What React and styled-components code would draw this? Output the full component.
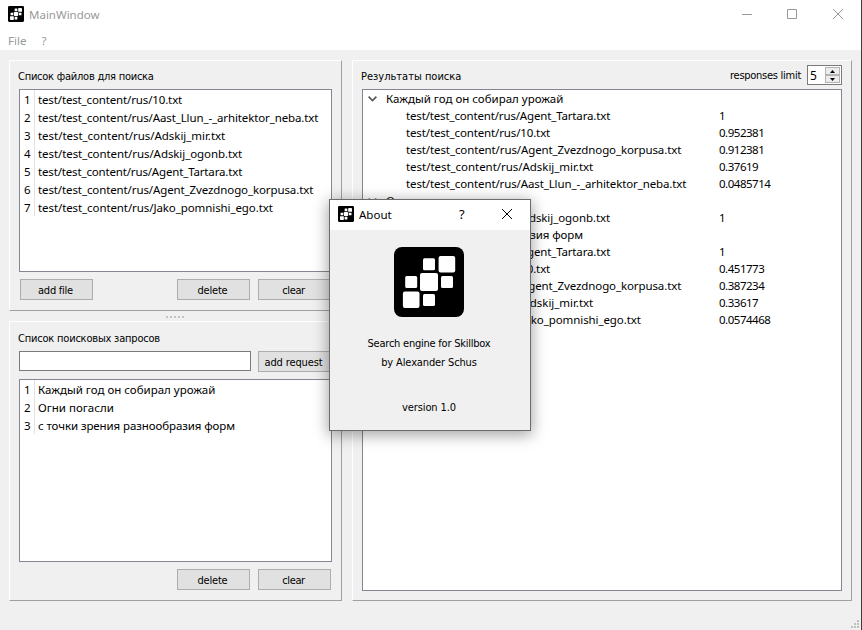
import React from "react";
import styled, { createGlobalStyle } from "styled-components";

const GlobalStyle = createGlobalStyle`
  * { box-sizing: border-box; }
  body { margin: 0; background: #f0f0f0; color: #000; overflow: hidden; }
`;

const listFont = '11.5px "Noto Sans", "Open Sans", sans-serif';
const labelFont = '11px "DejaVu Sans Condensed", "DejaVu Sans", sans-serif';

const Window = styled.div`
  position: relative;
  width: 862px;
  height: 630px;
  display: flex;
  flex-direction: column;
  background: #f0f0f0;
  border-right: 1px solid #3c3c3c;
  font: ${listFont};
`;

const Header = styled.header`
  height: 50px;
  flex: none;
  background: #fff;
  color: #999;
`;

const TitleBar = styled.div`
  height: 30px;
  display: flex;
  align-items: center;
  padding: 0 0 2px 8px;
  gap: 5px;
`;

const WindowTitle = styled.span`
  flex: 1;
  padding-top: 1px;
`;

const Controls = styled.svg`
  display: block;
  flex: none;
`;

const MenuBar = styled.nav`
  display: flex;
  gap: 15px;
  padding-left: 8px;
  line-height: 22px;
`;

const Workspace = styled.main`
  flex: 1;
  display: flex;
  gap: 10px;
  padding: 10px 9px 29px 9px;
`;

const Splitter = styled.div`
  width: 333px;
  display: flex;
  flex-direction: column;
`;

const Frame = styled.section`
  display: flex;
  flex-direction: column;
  height: ${(p) => p.$height}px;
  flex: ${(p) => (p.$grow ? 1 : "none")};
  border: 1px solid;
  border-color: #fff #a0a0a0 #a0a0a0 #fff;
  padding: ${(p) => p.$pad || "9px 9px 10px"};
`;

const Handle = styled.div`
  height: 10px;
  display: flex;
  justify-content: center;
  gap: 2px;
  padding: 5px 2px 0 0;
`;

const HandleDot = styled.i`
  width: 2px;
  height: 2px;
  background: #c4c4c4;
`;

const Label = styled.span`
  font: ${labelFont};
  line-height: ${(p) => p.$line || 14}px;
  white-space: nowrap;
  letter-spacing: ${(p) => p.$tracking || 0}px;
`;

const GroupLabel = styled(Label)`
  margin-left: -1px;
`;

const ListBox = styled.div`
  flex: 1;
  min-height: 0;
  background: #fff;
  border: 1px solid #828790;
  margin-top: ${(p) => p.$top || 0}px;
`;

const ListRow = styled.div`
  height: 18px;
  display: flex;
  line-height: 20px;
`;

const RowNumber = styled.span`
  width: 15px;
  padding-left: 4px;
  border-right: 1px solid #e2e2e2;
`;

const ItemText = styled.span`
  padding-left: ${(p) => p.$indent || 0}px;
  white-space: nowrap;
  letter-spacing: ${(p) => p.$tracking || 0}px;
`;

const ButtonRow = styled.div`
  display: flex;
  gap: 8px;
  padding: 0 1px;
  margin-top: 7px;
  justify-content: flex-end;
`;

const Button = styled.button`
  width: 73px;
  height: 21px;
  flex: none;
  padding: 1px 2px 0 0;
  background: #e1e1e1;
  border: 1px solid #adadad;
  color: #000;
  text-align: center;
  font: ${labelFont};
  letter-spacing: ${(p) => p.$tracking || -0.2}px;
  margin-right: ${(p) => (p.$pushRight ? "auto" : 0)};
`;

const RequestRow = styled.div`
  display: flex;
  gap: 7px;
  margin-top: 5px;
`;

const RequestInput = styled.input`
  width: 232px;
  height: 20px;
  background: #fff;
  border: 1px solid #7a7a7a;
  outline: none;
`;

const ResultsHeader = styled.div`
  display: flex;
  height: 20px;
  align-items: flex-start;
  justify-content: space-between;
`;

const LimitGroup = styled.div`
  display: flex;
  gap: 6px;
`;

const SpinBox = styled.div`
  width: 35px;
  height: 20px;
  display: flex;
  justify-content: space-between;
  background: #fff;
  border: 1px solid #7a7a7a;
  padding-left: 2px;
  font: 12px/20px "Noto Sans", sans-serif;
`;

const SpinButtons = styled.div`
  width: 16px;
  display: grid;
  grid-template-rows: 8px 8px;
  padding: 1px 1px 1px 0;
`;

const SpinButton = styled.div`
  display: grid;
  place-items: center;
  background: #ececec;
  border: 1px solid #b4b4b4;
`;

const TreeRow = styled.div`
  height: 17px;
  display: flex;
  line-height: 17px;
  align-items: center;
`;

const TreeName = styled.div`
  width: 356px;
  display: flex;
  align-items: center;
  padding-left: ${(p) => (p.$child ? 43 : 5)}px;
  gap: 9px;
`;

const Grip = styled.svg`
  position: absolute;
  right: 2px;
  bottom: 2px;
`;

const Dialog = styled.div`
  position: absolute;
  left: 329px;
  top: 199px;
  width: 202px;
  height: 232px;
  border: 1px solid #6b6b6b;
  background: #f0f0f0;
  box-shadow: 0 3px 14px 1px rgba(0, 0, 0, 0.36);
`;

const DialogTitle = styled.div`
  height: 30px;
  display: flex;
  align-items: center;
  gap: 5px;
  padding: 0 0 2px 8px;
  background: #fff;
`;

const DialogName = styled.span`
  flex: 1;
  padding-top: 1px;
`;

const HelpMark = styled.span`
  font-size: 13px;
  width: 37px;
`;

const DialogBody = styled.div`
  display: flex;
  flex-direction: column;
  align-items: center;
  padding: 17px 2px 0 0;
`;

const Spacer = styled.div`
  height: ${(p) => p.$size}px;
`;

function Logo({ size }) {
  return (
    <svg width={size} height={size} viewBox="0 0 70 70">
      <rect width="70" height="70" rx={size < 20 ? 5 : 8} fill="#000" />
      <g fill="#fff">
        <rect x="29" y="11.2" width="12" height="12" rx="1.5" />
        <rect x="44.6" y="9" width="16.6" height="16.6" rx="2" />
        <rect x="11.2" y="29" width="12" height="12" rx="1.5" />
        <rect x="26" y="26" width="18" height="18" rx="2" />
        <rect x="47" y="29" width="12" height="12" rx="1.5" />
        <rect x="8.9" y="44.4" width="16.6" height="16.6" rx="2" />
        <rect x="29" y="47" width="12" height="12" rx="1.5" />
      </g>
    </svg>
  );
}

const dir = "test/test_content/rus/";

const files = [
  ["10.txt", -0.14],
  ["Aast_Llun_-_arhitektor_neba.txt", -0.12],
  ["Adskij_mir.txt", -0.04],
  ["Adskij_ogonb.txt", -0.08],
  ["Agent_Tartara.txt", -0.16],
  ["Agent_Zvezdnogo_korpusa.txt", -0.11],
  ["Jako_pomnishi_ego.txt", -0.09],
];
const tracking = Object.fromEntries(files);

const requests = [
  ["Каждый год он собирал урожай", 0],
  ["Огни погасли", 0],
  ["с точки зрения разнообразия форм", -0.09],
];

const results = [
  [
    ["Agent_Tartara.txt", "1"],
    ["10.txt", "0.952381"],
    ["Agent_Zvezdnogo_korpusa.txt", "0.912381"],
    ["Adskij_mir.txt", "0.37619"],
    ["Aast_Llun_-_arhitektor_neba.txt", "0.0485714"],
  ],
  [["Adskij_ogonb.txt", "1"]],
  [
    ["Agent_Tartara.txt", "1"],
    ["10.txt", "0.451773"],
    ["Agent_Zvezdnogo_korpusa.txt", "0.387234"],
    ["Adskij_mir.txt", "0.33617"],
    ["Jako_pomnishi_ego.txt", "0.0574468"],
  ],
];

function NumberedList({ items, top }) {
  return (
    <ListBox $top={top}>
      {items.map(([text, space], i) => (
        <ListRow key={text}>
          <RowNumber>{i + 1}</RowNumber>
          <ItemText $indent={3} $tracking={space}>{text}</ItemText>
        </ListRow>
      ))}
    </ListBox>
  );
}

function ResultTree() {
  return (
    <ListBox $top={4}>
      {results.map((children, i) => (
        <React.Fragment key={i}>
          <TreeRow>
            <TreeName>
              <svg width="9" height="6" viewBox="0 0 9 6">
                <path d="M0.6 0.6 4.5 4.5 8.4 0.6" fill="none" stroke="#555" strokeWidth="1.6" />
              </svg>
              <ItemText $tracking={requests[i][1]}>{requests[i][0]}</ItemText>
            </TreeName>
          </TreeRow>
          {children.map(([name, score]) => (
            <TreeRow key={name}>
              <TreeName $child>
                <ItemText $tracking={tracking[name]}>{dir + name}</ItemText>
              </TreeName>
              <ItemText $tracking={-0.48}>{score}</ItemText>
            </TreeRow>
          ))}
        </React.Fragment>
      ))}
    </ListBox>
  );
}

export default function App() {
  return (
    <Window>
      <GlobalStyle />
      <Header>
        <TitleBar>
          <Logo size={16} />
          <WindowTitle>MainWindow</WindowTitle>
          <Controls width="120" height="12" viewBox="0 0 120 12" fill="none" stroke="#999">
            <path d="M1 6.5H11M46.5 1.5h9v9h-9zM92 1 102 11M102 1 92 11" />
          </Controls>
        </TitleBar>
        <MenuBar>
          <span>File</span>
          <span>?</span>
        </MenuBar>
      </Header>

      <Workspace>
        <Splitter>
          <Frame $height={251}>
            <GroupLabel $tracking={-0.24}>Список файлов для поиска</GroupLabel>
            <NumberedList top={5} items={files.map(([name, space]) => [dir + name, space])} />
            <ButtonRow>
              <Button $pushRight $tracking={-0.24}>add file</Button>
              <Button>delete</Button>
              <Button $tracking={-0.38}>clear</Button>
            </ButtonRow>
          </Frame>
          <Handle>
            {[0, 1, 2, 3, 4].map((n) => <HandleDot key={n} />)}
          </Handle>
          <Frame $grow $pad="10px 9px 10px">
            <GroupLabel $tracking={-0.2}>Список поисковых запросов</GroupLabel>
            <RequestRow>
              <RequestInput aria-label="request" />
              <Button $tracking={-0.13}>add request</Button>
            </RequestRow>
            <NumberedList top={7} items={requests} />
            <ButtonRow>
              <Button>delete</Button>
              <Button $tracking={-0.38}>clear</Button>
            </ButtonRow>
          </Frame>
        </Splitter>

        <Frame $grow $pad="4px 9px 9px">
          <ResultsHeader>
            <GroupLabel $line={24}>Результаты поиска</GroupLabel>
            <LimitGroup>
              <Label $line={21} $tracking={-0.27}>responses limit</Label>
              <SpinBox>
                5
                <SpinButtons>
                  <SpinButton>
                    <svg width="5" height="3"><path d="M0 3 2.5 0 5 3z" /></svg>
                  </SpinButton>
                  <SpinButton>
                    <svg width="5" height="3"><path d="M0 0 2.5 3 5 0z" /></svg>
                  </SpinButton>
                </SpinButtons>
              </SpinBox>
            </LimitGroup>
          </ResultsHeader>
          <ResultTree />
        </Frame>
      </Workspace>

      <Grip width="8" height="8" fill="#bfbfbf">
        <path d="M6 0h2v2h-2zM3 3h2v2h-2zM6 3h2v2h-2zM0 6h2v2h-2zM3 6h2v2h-2zM6 6h2v2h-2z" />
      </Grip>

      <Dialog>
        <DialogTitle>
          <Logo size={16} />
          <DialogName>About</DialogName>
          <HelpMark>?</HelpMark>
          <Controls width="29" height="12" viewBox="0 0 29 12" fill="none" stroke="#000">
            <path d="M1 1 11 11M11 1 1 11" />
          </Controls>
        </DialogTitle>
        <DialogBody>
          <Logo size={70} />
          <Spacer $size={17} />
          <Label $line={19} $tracking={-0.23}>Search engine for Skillbox</Label>
          <Label $line={19} $tracking={-0.13}>by Alexander Schus</Label>
          <Spacer $size={26} />
          <Label $line={19} $tracking={-0.1}>version 1.0</Label>
        </DialogBody>
      </Dialog>
    </Window>
  );
}
